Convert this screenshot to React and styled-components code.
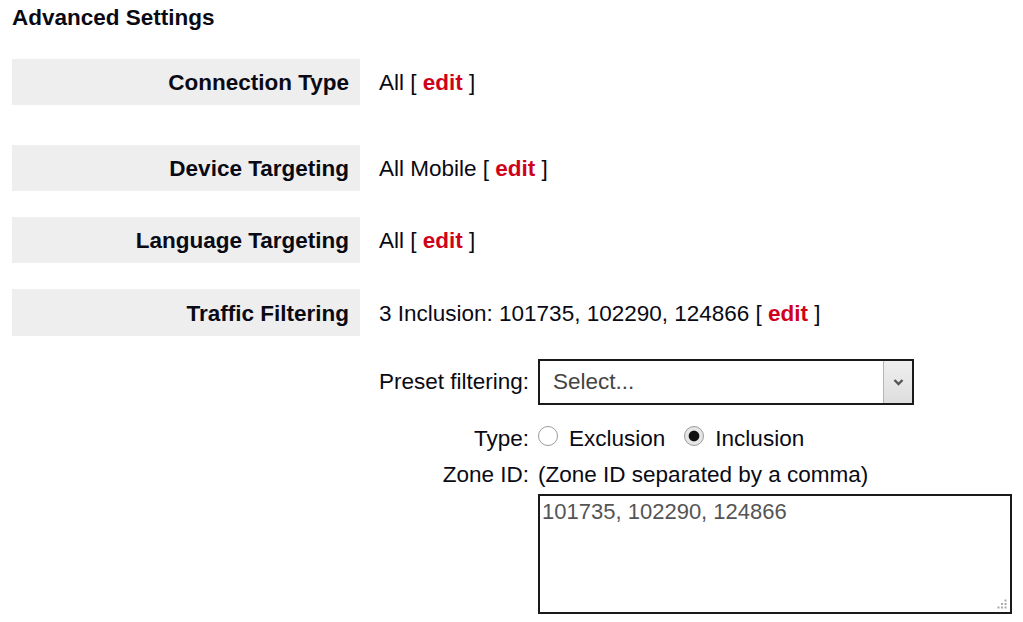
import React from 'react'
import styled, { createGlobalStyle } from 'styled-components'

const GlobalStyle = createGlobalStyle`
  body {
    margin: 0;
    background: #fff;
    font-family: "Liberation Sans", Arial, sans-serif;
    font-size: 22.5px;
    color: #0a0a14;
  }
`

const rows = [
  { label: 'Connection Type', value: 'All', top: 28 },
  { label: 'Device Targeting', value: 'All Mobile', top: 40 },
  { label: 'Language Targeting', value: 'All', top: 26 },
  { label: 'Traffic Filtering', value: '3 Inclusion: 101735, 102290, 124866', top: 26, tall: true },
]

export default function App() {
  return (
    <Page>
      <GlobalStyle />
      <Heading>Advanced Settings</Heading>
      {rows.map(row => (
        <Row key={row.label} $top={row.top}>
          <Label $tall={row.tall}>{row.label}</Label>
          <Value $tall={row.tall}>
            {row.value}&nbsp;[ <Edit>edit</Edit> ]
          </Value>
        </Row>
      ))}
      <Row $top={23}>
        <span />
        <SubForm>
          <SubLabel $h={46}>Preset filtering:</SubLabel>
          <SelectBox>
            <SelectText>Select...</SelectText>
            <SelectButton>
              <svg width="11" height="8" viewBox="0 0 11 8">
                <path d="M1.5 2 L5.5 6 L9.5 2" fill="none" stroke="#555" strokeWidth="2.4" />
              </svg>
            </SelectButton>
          </SelectBox>

          <SubLabel $h={36} $top={16}>Type:</SubLabel>
          <Options $top={16}>
            <Radio />
            <OptionText>Exclusion</OptionText>
            <Radio $checked />
            <OptionText>Inclusion</OptionText>
          </Options>

          <SubLabel $h={36}>Zone ID:</SubLabel>
          <Hint>(Zone ID separated by a comma)</Hint>

          <span />
          <AreaWrap>
            <ZoneArea readOnly value="101735, 102290, 124866" />
            <Grip>
              <svg width="10" height="10" viewBox="0 0 10 10">
                <rect x="7.5" y="0.5" width="2" height="2" fill="#aaa" />
                <rect x="4" y="4" width="2" height="2" fill="#aaa" />
                <rect x="7.5" y="4" width="2" height="2" fill="#aaa" />
                <rect x="0.5" y="7.5" width="2" height="2" fill="#aaa" />
                <rect x="4" y="7.5" width="2" height="2" fill="#aaa" />
                <rect x="7.5" y="7.5" width="2" height="2" fill="#aaa" />
              </svg>
            </Grip>
          </AreaWrap>
        </SubForm>
      </Row>
    </Page>
  )
}

const Page = styled.div`
  padding: 5px 0 0 12px;
`

const Heading = styled.h3`
  margin: 0;
  font-size: 22.5px;
  font-weight: bold;
  line-height: 26px;
`

const Row = styled.div`
  display: grid;
  grid-template-columns: 348px 1fr;
  column-gap: 19px;
  margin-top: ${p => p.$top}px;
`

const Label = styled.div`
  height: ${p => (p.$tall ? 47 : 46)}px;
  background: #eeeeee;
  display: flex;
  align-items: center;
  justify-content: flex-end;
  padding: 2px 11px 0 0;
  box-sizing: border-box;
  font-weight: bold;
`

const Value = styled.div`
  height: ${p => (p.$tall ? 47 : 46)}px;
  display: flex;
  align-items: center;
  padding-top: 2px;
  box-sizing: border-box;
  white-space: pre;
`

const Edit = styled.span`
  color: #d0021b;
  font-weight: bold;
`

const SubForm = styled.div`
  display: grid;
  grid-template-columns: auto 1fr;
  column-gap: 9px;
  align-items: start;
`

const SubLabel = styled.div`
  text-align: right;
  line-height: ${p => p.$h}px;
  padding-top: ${p => p.$top || 0}px;
  white-space: nowrap;
`

const SelectBox = styled.div`
  width: 376px;
  height: 46px;
  box-sizing: border-box;
  border: 2px solid #1a1a1a;
  display: flex;
  align-items: stretch;
  background: #fff;
`

const SelectText = styled.div`
  flex: 1;
  display: flex;
  align-items: center;
  padding-left: 13px;
  color: #444;
`

const SelectButton = styled.div`
  width: 28px;
  display: flex;
  align-items: center;
  justify-content: center;
  background: linear-gradient(#efefef, #dedede);
  border-left: 1px solid #b5b5b5;
`

const Options = styled.div`
  display: flex;
  align-items: center;
  height: 36px;
  padding-top: ${p => p.$top || 0}px;
`

const Radio = styled.span`
  width: 20px;
  height: 20px;
  box-sizing: border-box;
  border-radius: 50%;
  border: 1px solid #9a9a9a;
  background: ${p => (p.$checked ? 'radial-gradient(circle, #111 0 4.8px, #e6e6e6 5.8px)' : '#fff')};
  margin: 0 11px 6px 0;
  flex-shrink: 0;
`

const OptionText = styled.span`
  margin-right: 19px;
`

const Hint = styled.div`
  line-height: 36px;
  white-space: nowrap;
`

const AreaWrap = styled.div`
  position: relative;
  width: 474px;
  height: 120px;
  margin-top: 1px;
`

const ZoneArea = styled.textarea`
  width: 100%;
  height: 100%;
  box-sizing: border-box;
  border: 2px solid #1a1a1a;
  border-radius: 0;
  padding: 3px 2px;
  margin: 0;
  resize: none;
  outline: none;
  font-family: "Liberation Sans", Arial, sans-serif;
  font-size: 22px;
  line-height: 26px;
  color: #555;
`

const Grip = styled.div`
  position: absolute;
  right: 5px;
  bottom: 5px;
  line-height: 0;
`
